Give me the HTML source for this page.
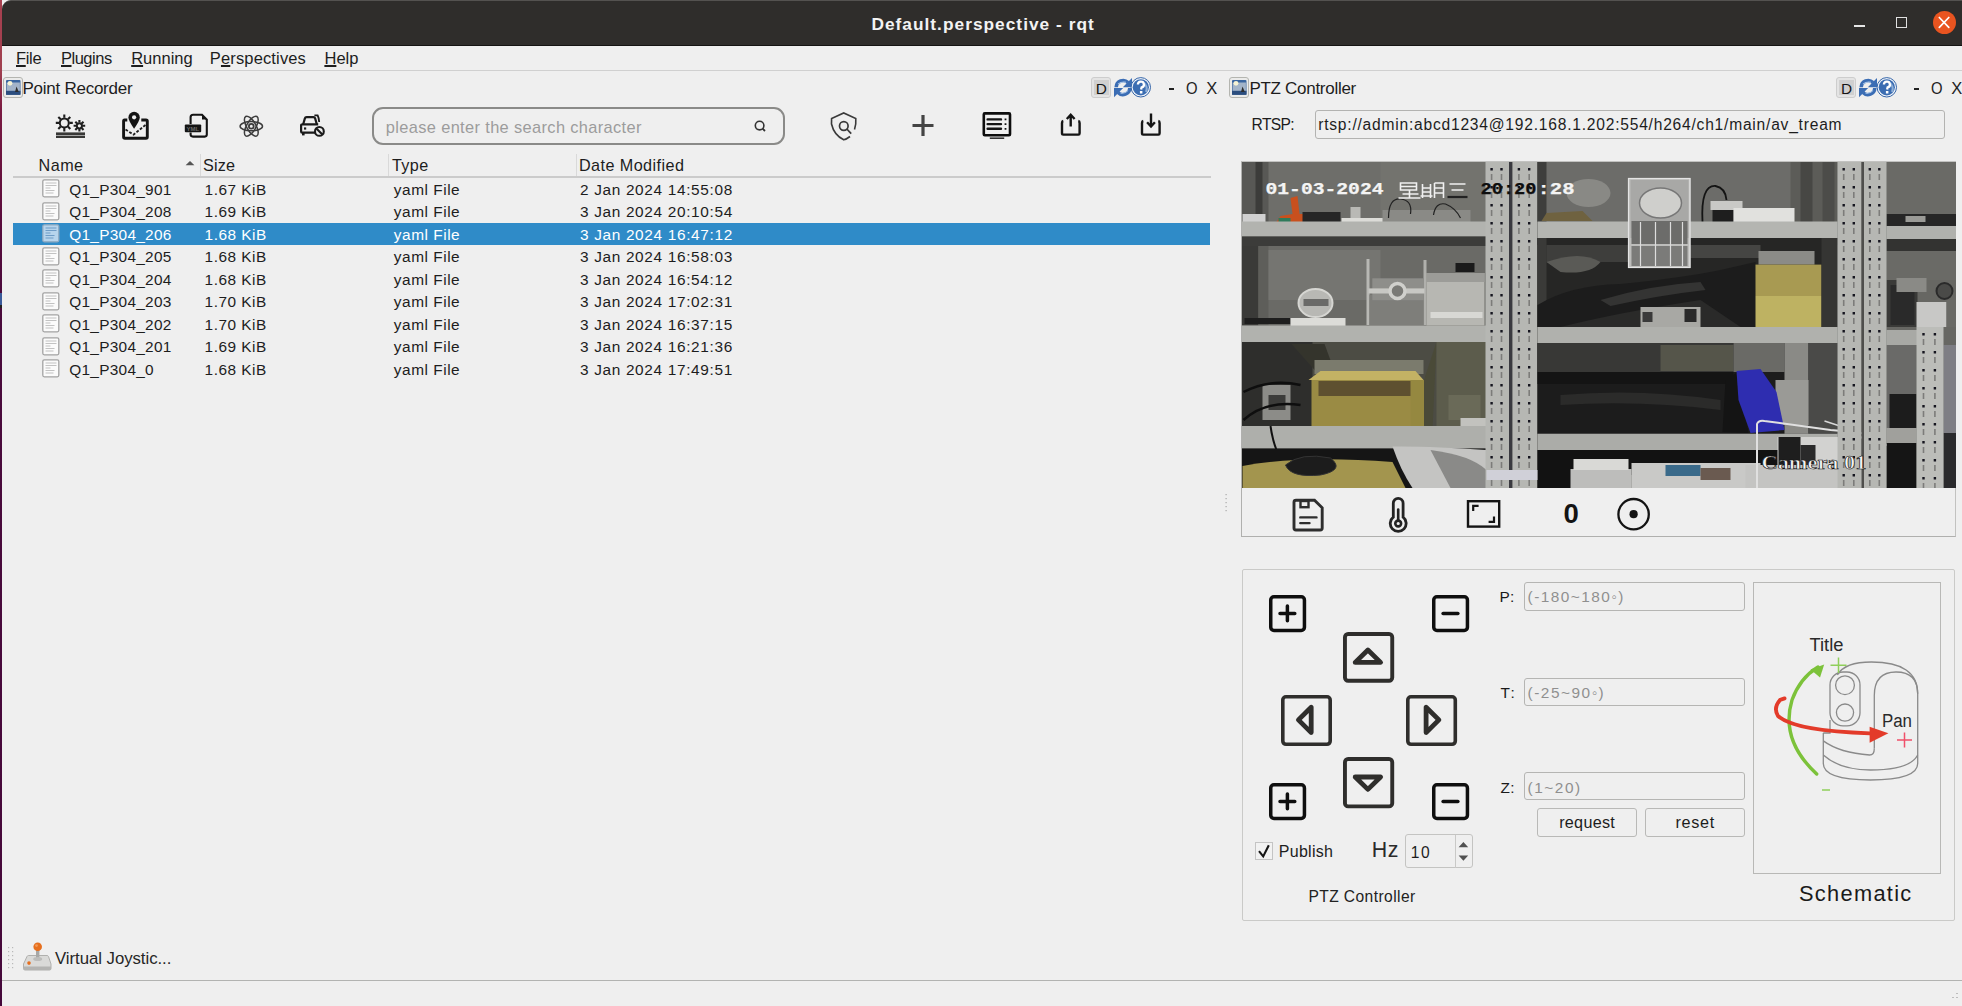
<!DOCTYPE html>
<html><head><meta charset="utf-8">
<style>
*{margin:0;padding:0;box-sizing:border-box}
html,body{width:1962px;height:1006px;overflow:hidden;background:#efefef;font-family:"Liberation Sans",sans-serif;color:#1d1d1d}
.a{position:absolute;white-space:nowrap}
.t{position:absolute;white-space:nowrap;line-height:1}
</style></head><body>

<div class="a" style="left:0;top:0;width:2px;height:1006px;background:linear-gradient(#a8404f 0px,#a04050 70px,#7a1a42 110px,#5a0c3c 220px,#4a0a3c 300px,#45083a 1006px)"></div>
<div class="a" style="left:2px;top:0;width:1960px;height:46px;background:#2f2d2b;border-top:1px solid #545250;border-bottom:1px solid #151413;border-top-left-radius:9px"></div>
<div class="t" id="title" style="left:871.40px;top:15.54px;font-size:17.3px;color:#f3f3f3;font-weight:bold;font-family:'Liberation Sans',sans-serif;letter-spacing:1.021px;">Default.perspective - rqt</div>
<div class="a" style="left:1854px;top:25px;width:11px;height:2px;background:#e6e6e6"></div>
<div class="a" style="left:1896px;top:17px;width:11px;height:11px;border:1.6px solid #e0e0e0"></div>
<div class="a" style="left:1932.5px;top:10.7px;width:23.5px;height:23.5px;border-radius:50%;background:#e95420"></div>
<svg class="a" style="left:1932px;top:11px" width="24" height="24"><path d="M7.3 6.5 L16.8 16.3 M16.8 6.5 L7.3 16.3" stroke="#fff" stroke-width="1.7" stroke-linecap="round"/></svg>
<div class="a" style="left:0;top:293px;width:2px;height:13px;background:#3a5a9a"></div><div class="a" style="left:0;top:305px;width:2px;height:3px;background:#222"></div>
<div class="t" id="m_file" style="left:16.00px;top:50.25px;font-size:16.5px;color:#1d1d1d;font-weight:normal;font-family:'Liberation Sans',sans-serif;letter-spacing:-0.333px;"><span style="text-decoration:underline;text-underline-offset:1px;text-decoration-thickness:1.6px">F</span>ile</div>
<div class="t" id="m_plug" style="left:61.00px;top:50.25px;font-size:16.5px;color:#1d1d1d;font-weight:normal;font-family:'Liberation Sans',sans-serif;letter-spacing:-0.500px;"><span style="text-decoration:underline;text-underline-offset:1px;text-decoration-thickness:1.6px">P</span>lugins</div>
<div class="t" id="m_run" style="left:131.20px;top:50.25px;font-size:16.5px;color:#1d1d1d;font-weight:normal;font-family:'Liberation Sans',sans-serif;letter-spacing:0.000px;"><span style="text-decoration:underline;text-underline-offset:1px;text-decoration-thickness:1.6px">R</span>unning</div>
<div class="t" id="m_persp" style="left:209.80px;top:50.25px;font-size:16.5px;color:#1d1d1d;font-weight:normal;font-family:'Liberation Sans',sans-serif;letter-spacing:0.145px;">P<span style="text-decoration:underline;text-underline-offset:1px;text-decoration-thickness:1.6px">e</span>rspectives</div>
<div class="t" id="m_help" style="left:324.40px;top:50.25px;font-size:16.5px;color:#1d1d1d;font-weight:normal;font-family:'Liberation Sans',sans-serif;letter-spacing:0.067px;"><span style="text-decoration:underline;text-underline-offset:1px;text-decoration-thickness:1.6px">H</span>elp</div>
<div class="a" style="left:2px;top:70px;width:1960px;height:1px;background:#d0d0d0"></div>
<svg class="a" style="left:3px;top:77px" width="20" height="21" viewBox="0 0 20 21"><rect x="0.5" y="0.5" width="19" height="20" rx="2.5" fill="#ebebea" stroke="#b4b5b0"/>
<rect x="3" y="3" width="14.5" height="14.8" rx="1" fill="#3a66a0"/>
<rect x="3.6" y="5.5" width="13.3" height="8.5" fill="#a3b4c9"/>
<circle cx="7" cy="6.3" r="2.4" fill="#f6f3d4"/>
<path d="M3 13.8 L17.5 13.8 L17.5 17.8 L3 17.8Z" fill="#2b4d7e"/>
<path d="M13.5 9.5 L15.8 15 L12 15Z" fill="#2e2e2e"/></svg>
<div class="t" id="dt_pr" style="left:22.40px;top:79.98px;font-size:17px;color:#1d1d1d;font-weight:normal;font-family:'Liberation Sans',sans-serif;letter-spacing:-0.246px;">Point Recorder</div>
<div class="a" style="left:1091.2px;top:77px;width:20px;height:21px;border:1px solid #cdcdcd;border-radius:3px;background:#e4e4e4"></div>
<div class="a" style="left:1094.2px;top:80px;width:15px;height:15px;background:#d0d0d0"></div>
<div class="t" style="left:1095.8px;top:80.59px;font-size:15.4px;color:#161616;letter-spacing:0">D</div>
<svg class="a" style="left:1112.5px;top:77px" width="20" height="21" viewBox="0 0 20 21"><path d="M3.2 10.2 A6.9 6.9 0 0 1 15 5.6" fill="none" stroke="#3b6db4" stroke-width="3.6"/>
<path d="M19 1 L19 10.3 L9.8 10.3Z" fill="#3b6db4"/>
<path d="M16.8 11 A6.9 6.9 0 0 1 5 15.6" fill="none" stroke="#3b6db4" stroke-width="3.6"/>
<path d="M1 20.2 L1 10.9 L10.2 10.9Z" fill="#3b6db4"/>
<path d="M5 7.2 Q8.5 4.2 13 5.2 M15 13.5 Q12 17 7.5 16" fill="none" stroke="#a9c6ea" stroke-width="1.1"/></svg>
<svg class="a" style="left:1130.4px;top:77px" width="22" height="21" viewBox="0 0 22 21"><circle cx="10.8" cy="10.3" r="9.7" fill="#f2f5fa" stroke="#3565a8" stroke-width="1"/>
<circle cx="10.8" cy="10.3" r="8.1" fill="#3b6db2"/>
<path d="M14 6 A8 8 0 0 1 16 15" stroke="#8fb0d8" stroke-width="2" fill="none"/>
<path d="M7.9 7.6 A3 2.9 0 1 1 11.6 10.4 L11.1 12.6" stroke="#fff" stroke-width="2.3" fill="none"/>
<rect x="9.9" y="14" width="2.5" height="2.5" fill="#fff"/></svg>
<div class="a" style="left:1168.7px;top:88px;width:5px;height:2.2px;background:#222"></div>
<div class="t" style="left:1185.8px;top:79.85px;font-size:16.5px;color:#222;transform:scaleX(0.9);transform-origin:left">O</div>
<div class="t" style="left:1206.2px;top:79.85px;font-size:16.5px;color:#222">X</div>
<svg class="a" style="left:1229px;top:77px" width="20" height="21" viewBox="0 0 20 21"><rect x="0.5" y="0.5" width="19" height="20" rx="2.5" fill="#ebebea" stroke="#b4b5b0"/>
<rect x="3" y="3" width="14.5" height="14.8" rx="1" fill="#3a66a0"/>
<rect x="3.6" y="5.5" width="13.3" height="8.5" fill="#a3b4c9"/>
<circle cx="7" cy="6.3" r="2.4" fill="#f6f3d4"/>
<path d="M3 13.8 L17.5 13.8 L17.5 17.8 L3 17.8Z" fill="#2b4d7e"/>
<path d="M13.5 9.5 L15.8 15 L12 15Z" fill="#2e2e2e"/></svg>
<div class="t" id="dt_ptz" style="left:1249.40px;top:79.98px;font-size:17px;color:#1d1d1d;font-weight:normal;font-family:'Liberation Sans',sans-serif;letter-spacing:-0.285px;">PTZ Controller</div>
<div class="a" style="left:1836.3px;top:77px;width:20px;height:21px;border:1px solid #cdcdcd;border-radius:3px;background:#e4e4e4"></div>
<div class="a" style="left:1839.3px;top:80px;width:15px;height:15px;background:#d0d0d0"></div>
<div class="t" style="left:1840.8999999999999px;top:80.59px;font-size:15.4px;color:#161616;letter-spacing:0">D</div>
<svg class="a" style="left:1857.6px;top:77px" width="20" height="21" viewBox="0 0 20 21"><path d="M3.2 10.2 A6.9 6.9 0 0 1 15 5.6" fill="none" stroke="#3b6db4" stroke-width="3.6"/>
<path d="M19 1 L19 10.3 L9.8 10.3Z" fill="#3b6db4"/>
<path d="M16.8 11 A6.9 6.9 0 0 1 5 15.6" fill="none" stroke="#3b6db4" stroke-width="3.6"/>
<path d="M1 20.2 L1 10.9 L10.2 10.9Z" fill="#3b6db4"/>
<path d="M5 7.2 Q8.5 4.2 13 5.2 M15 13.5 Q12 17 7.5 16" fill="none" stroke="#a9c6ea" stroke-width="1.1"/></svg>
<svg class="a" style="left:1875.5px;top:77px" width="22" height="21" viewBox="0 0 22 21"><circle cx="10.8" cy="10.3" r="9.7" fill="#f2f5fa" stroke="#3565a8" stroke-width="1"/>
<circle cx="10.8" cy="10.3" r="8.1" fill="#3b6db2"/>
<path d="M14 6 A8 8 0 0 1 16 15" stroke="#8fb0d8" stroke-width="2" fill="none"/>
<path d="M7.9 7.6 A3 2.9 0 1 1 11.6 10.4 L11.1 12.6" stroke="#fff" stroke-width="2.3" fill="none"/>
<rect x="9.9" y="14" width="2.5" height="2.5" fill="#fff"/></svg>
<div class="a" style="left:1913.8px;top:88px;width:5px;height:2.2px;background:#222"></div>
<div class="t" style="left:1930.8999999999999px;top:79.85px;font-size:16.5px;color:#222;transform:scaleX(0.9);transform-origin:left">O</div>
<div class="t" style="left:1951.3px;top:79.85px;font-size:16.5px;color:#222">X</div>
<svg class="a" style="left:6px;top:945px" width="10" height="26" viewBox="0 0 10 26">
<g fill="#b9b9b9"><rect x="2" y="2" width="1.2" height="1.2"/><rect x="6" y="2" width="1.2" height="1.2"/>
<rect x="2" y="6" width="1.2" height="1.2"/><rect x="6" y="6" width="1.2" height="1.2"/>
<rect x="2" y="10" width="1.2" height="1.2"/><rect x="6" y="10" width="1.2" height="1.2"/>
<rect x="2" y="14" width="1.2" height="1.2"/><rect x="6" y="14" width="1.2" height="1.2"/>
<rect x="2" y="18" width="1.2" height="1.2"/><rect x="6" y="18" width="1.2" height="1.2"/>
<rect x="2" y="22" width="1.2" height="1.2"/><rect x="6" y="22" width="1.2" height="1.2"/></g></svg>
<svg class="a" style="left:22px;top:941px" width="32" height="32" viewBox="0 0 32 32">
<path d="M6.5 14.5 L25 14.5 Q26 14.5 26.5 15.5 L29 23 L29 27.5 Q29 29 27.5 29 L3 29 Q1.5 29 1.5 27.5 L1.5 23 L5 15.5 Q5.5 14.5 6.5 14.5Z" fill="#dadad8" stroke="#a9a9a7" stroke-width="0.9"/>
<path d="M1.5 25.5 L29 25.5 L29 27.5 Q29 29 27.5 29 L3 29 Q1.5 29 1.5 27.5Z" fill="#b4b4b2"/>
<rect x="14" y="8" width="3.4" height="10" fill="#a8a8a6"/>
<ellipse cx="15.7" cy="18" rx="4.5" ry="2" fill="#bdbdbb"/>
<circle cx="15.7" cy="5.8" r="4.3" fill="#e66f1e"/>
<circle cx="14.5" cy="4.6" r="1.4" fill="#f39a55"/>
<circle cx="7" cy="22.1" r="1.8" fill="#e66f1e"/>
</svg>
<div class="t" id="vj" style="left:55.00px;top:950.81px;font-size:16.8px;color:#262626;font-weight:normal;font-family:'Liberation Sans',sans-serif;letter-spacing:-0.047px;">Virtual Joystic...</div>
<div class="a" style="left:2px;top:980px;width:1960px;height:1px;background:#b2b3b1"></div>
<svg class="a" style="left:1944px;top:990px" width="18" height="16"><g fill="#bdbdbd"><rect x="12" y="3" width="2" height="1"/><rect x="8" y="7" width="2" height="1"/><rect x="12" y="7" width="2" height="1"/></g></svg>
<svg class="a" style="left:50px;top:105px" width="40" height="40" viewBox="50 105 40 40">
<g fill="none" stroke="#1e1e1e">
<circle cx="64.3" cy="122.9" r="4.5" stroke-width="2"/>
<circle cx="79.4" cy="125.8" r="2.6" stroke-width="2"/>
</g>
<g stroke="#1e1e1e" stroke-width="2.1">
<path d="M64.3 114.4v3.4 M64.3 128v3.4 M55.8 122.9h3.4 M69.4 122.9h3.4 M58.3 116.9l2.4 2.4 M67.9 126.5l2.4 2.4 M58.3 128.9l2.4-2.4 M67.9 119.3l2.4-2.4"/>
<path d="M79.4 120v2.6 M79.4 129v2.6 M73.6 125.8h2.6 M82.6 125.8h2.6 M75.3 121.7l1.8 1.8 M81.7 128.1l1.8 1.8 M75.3 129.9l1.8-1.8 M81.7 123.5l1.8-1.8"/>
</g>
<rect x="56" y="132.4" width="29" height="2.6" fill="#383836"/>
<rect x="56" y="135.6" width="29" height="2.4" fill="#383836"/>
</svg>
<svg class="a" style="left:115px;top:105px" width="40" height="40" viewBox="115 105 40 40">
<path d="M127.3 120 L124.6 120 Q123.6 120 123.6 121.2 L123.6 137 Q123.6 138.2 125 138.2 L146 138.2 Q147.3 138.2 147.3 137 L147.3 121.2 Q147.3 120 146 120 L141.3 120" fill="none" stroke="#141414" stroke-width="2.9"/>
<path d="M134.1 111.8 A5.7 5.7 0 0 1 139.8 117.5 Q139.8 120.5 134.1 128.8 Q128.4 120.5 128.4 117.5 A5.7 5.7 0 0 1 134.1 111.8Z" fill="#141414"/>
<circle cx="134.1" cy="117.3" r="2.1" fill="#efefef"/>
<path d="M125.5 129.6 L133.6 134.6 L146 124.6" fill="none" stroke="#1e1e1e" stroke-width="1.8" stroke-dasharray="2.8 1.6"/>
</svg>
<svg class="a" style="left:180px;top:105px" width="35" height="40" viewBox="180 105 35 40">
<path d="M190.6 124 L190.6 117.2 Q190.6 114.7 193.2 114.7 L202 114.7 L206.8 119.6 L206.8 134.6 Q206.8 136.6 204.8 136.6 L193 136.6 Q190.6 136.6 190.6 134.6 L190.6 132.4" fill="none" stroke="#141414" stroke-width="2.1"/>
<path d="M202 114.7 L206.8 119.6 L202 119.6Z" fill="#141414"/>
<rect x="184.8" y="124.4" width="16.4" height="7.8" rx="1" fill="#141414"/>
<text x="186.4" y="130.6" font-size="6" font-family="Liberation Sans" font-weight="bold" fill="#6a6a6a">YML</text>
</svg>
<svg class="a" style="left:236px;top:110px" width="32" height="32" viewBox="236 110 32 32">
<g fill="none" stroke="#3c3c3c" stroke-width="1.5">
<ellipse cx="251.3" cy="126.2" rx="11.2" ry="4.6"/>
<ellipse cx="251.3" cy="126.2" rx="11.2" ry="4.6" transform="rotate(60 251.3 126.2)"/>
<ellipse cx="251.3" cy="126.2" rx="11.2" ry="4.6" transform="rotate(-60 251.3 126.2)"/>
<circle cx="251.3" cy="126.2" r="2.4" stroke-width="1.8"/>
</g>
</svg>
<svg class="a" style="left:296px;top:110px" width="34" height="32" viewBox="296 110 34 32">
<path d="M303.2 124.2 L304.8 118.6 Q305.2 117.2 306.6 117.2 L313.5 117.2 Q314.8 117.2 315.2 118.6 L316.8 124.2" fill="none" stroke="#1a1a1a" stroke-width="2.2"/>
<path d="M314.4 115.3 L317.6 115.3 Q318.8 117.5 319.2 122" fill="none" stroke="#1a1a1a" stroke-width="1.8"/>
<path d="M315 132.6 L302.2 132.6 Q301.1 132.6 301.1 131.5 L301.1 125.6 Q301.1 124.4 302.6 124.4 L318.2 124.4" fill="none" stroke="#1a1a1a" stroke-width="2.2"/>
<rect x="302" y="132" width="2.6" height="3.4" fill="#1a1a1a"/>
<rect x="304" y="127.4" width="2.2" height="2.2" fill="#1a1a1a"/>
<circle cx="319.4" cy="131.4" r="4.4" fill="none" stroke="#1a1a1a" stroke-width="2.1"/>
<path d="M316.4 128.4 L322.4 134.4" stroke="#1a1a1a" stroke-width="2.1"/>
</svg>
<div class="a" style="left:372px;top:107px;width:413px;height:38px;border:2px solid #8a8a88;border-radius:11px"></div>
<div class="t" id="search" style="left:385.80px;top:118.76px;font-size:16.4px;color:#9c9c9c;font-weight:normal;font-family:'Liberation Sans',sans-serif;letter-spacing:0.359px;">please enter the search character</div>
<svg class="a" style="left:752px;top:117px" width="16" height="18" viewBox="0 0 16 18">
<circle cx="7.6" cy="8.6" r="4.3" fill="none" stroke="#333" stroke-width="1.6"/>
<path d="M10.6 11.6 L13 14" stroke="#333" stroke-width="1.8"/></svg>
<svg class="a" style="left:828px;top:110px" width="32" height="32" viewBox="828 110 32 32">
<path d="M854.5 129.5 Q856.3 124 855.8 118.5 L843.7 113 L831.6 118.5 L831.5 124 Q834 135 843.7 139.8 Q846.5 139.2 850 136.5" fill="none" stroke="#3a3a3a" stroke-width="1.6"/>
<circle cx="843.8" cy="126" r="4.3" fill="none" stroke="#3a3a3a" stroke-width="1.7"/>
<path d="M846.8 129 L851.2 133.6" stroke="#3a3a3a" stroke-width="1.8"/></svg>
<svg class="a" style="left:908px;top:110px" width="30" height="30" viewBox="908 110 30 30">
<path d="M912.5 125.5 H933.5 M923 115 V136" stroke="#444" stroke-width="3.2"/></svg>
<svg class="a" style="left:978px;top:108px" width="38" height="34" viewBox="978 108 38 34">
<rect x="983.8" y="113.4" width="26.2" height="21.8" rx="1" fill="none" stroke="#0d0d0d" stroke-width="2.6"/>
<path d="M987.6 119.4 H1001 M987.6 124.1 H1001 M987.6 128.8 H1001" stroke="#151515" stroke-width="2.4" stroke-linecap="round"/>
<path d="M1005.5 118.4 v1.8 M1005.5 123.2 v1.8 M1005.5 127.9 v1.8" stroke="#151515" stroke-width="1.8"/>
<rect x="989.8" y="137.4" width="14.4" height="1.6" fill="#333"/></svg>
<svg class="a" style="left:1055px;top:108px;left:1055.0px" width="30" height="32" viewBox="1055.0 108 30 32">
<path d="M1063.3 121 Q1062.0 121.3 1062.0 123 L1062.0 133.3 Q1062.0 134.6 1063.3 134.6 L1078.4 134.6 Q1079.6 134.6 1079.6 133.3 L1079.6 123 Q1079.6 121.3 1078.3 121" fill="none" stroke="#151515" stroke-width="2.4"/>
</svg>
<svg class="a" style="left:1055px;top:108px;left:1135.3px" width="30" height="32" viewBox="1135.3 108 30 32">
<path d="M1143.6 121 Q1142.3 121.3 1142.3 123 L1142.3 133.3 Q1142.3 134.6 1143.6 134.6 L1158.7 134.6 Q1159.8999999999999 134.6 1159.8999999999999 133.3 L1159.8999999999999 123 Q1159.8999999999999 121.3 1158.6 121" fill="none" stroke="#151515" stroke-width="2.4"/>
</svg>
<svg class="a" style="left:1060px;top:108px" width="22" height="24" viewBox="1060 108 22 24">
<path d="M1070.7 126.5 V115.8 M1066.8 119 L1070.7 114.8 L1074.6 119" fill="none" stroke="#151515" stroke-width="2.4"/></svg>
<svg class="a" style="left:1140px;top:108px" width="22" height="24" viewBox="1140 108 22 24">
<path d="M1151 113.6 V126 M1147.1 122.3 L1151 126.5 L1154.9 122.3" fill="none" stroke="#151515" stroke-width="2.4"/></svg>
<div class="t" id="h_name" style="left:38.60px;top:157.29px;font-size:16.2px;color:#1d1d1d;font-weight:normal;font-family:'Liberation Sans',sans-serif;letter-spacing:0.433px;">Name</div>
<svg class="a" style="left:184px;top:159px" width="12" height="8"><path d="M1.6 6.2 L6 2 L10.4 6.2Z" fill="#555"/></svg>
<div class="a" style="left:199.5px;top:154px;width:1px;height:22px;background:#d9d9d9"></div>
<div class="a" style="left:388px;top:154px;width:1px;height:22px;background:#d9d9d9"></div>
<div class="a" style="left:576px;top:154px;width:1px;height:22px;background:#d9d9d9"></div>
<div class="t" id="h_size" style="left:203.00px;top:157.29px;font-size:16.2px;color:#1d1d1d;font-weight:normal;font-family:'Liberation Sans',sans-serif;letter-spacing:0.133px;">Size</div>
<div class="t" id="h_type" style="left:392.00px;top:157.29px;font-size:16.2px;color:#1d1d1d;font-weight:normal;font-family:'Liberation Sans',sans-serif;letter-spacing:0.367px;">Type</div>
<div class="t" id="h_date" style="left:579.00px;top:157.29px;font-size:16.2px;color:#1d1d1d;font-weight:normal;font-family:'Liberation Sans',sans-serif;letter-spacing:0.417px;">Date Modified</div>
<div class="a" style="left:13px;top:176px;width:1198px;height:2px;background:#cbcbcb"></div>
<div class="a" style="left:13px;top:223px;width:1197px;height:22px;background:#2f8bc8"></div>
<svg class="a" style="left:42px;top:179.3px" width="18" height="19" viewBox="0 0 18 19"><rect x="0.8" y="0.8" width="16" height="17" rx="1.5" fill="#fbfbfb" stroke="#a3a3a3" stroke-width="1.3"/><path d="M3.5 4h11 M3.5 6.5h11 M3.5 9h5 M3.5 11.5h9 M3.5 14h8" stroke="#c2c2c2" stroke-width="1.2"/></svg>
<div class="t" id="r_name" style="left:69.20px;top:181.99px;font-size:15.4px;color:#1d1d1d;font-weight:normal;font-family:'Liberation Sans',sans-serif;letter-spacing:0.290px;">Q1_P304_901</div>
<div class="t" id="r_size" style="left:204.60px;top:181.99px;font-size:15.4px;color:#1d1d1d;font-weight:normal;font-family:'Liberation Sans',sans-serif;letter-spacing:0.500px;">1.67 KiB</div>
<div class="t" id="r_type" style="left:393.80px;top:181.99px;font-size:15.4px;color:#1d1d1d;font-weight:normal;font-family:'Liberation Sans',sans-serif;letter-spacing:0.537px;">yaml File</div>
<div class="t" id="r_date" style="left:580.00px;top:181.99px;font-size:15.4px;color:#1d1d1d;font-weight:normal;font-family:'Liberation Sans',sans-serif;letter-spacing:0.661px;">2 Jan 2024 14:55:08</div>
<svg class="a" style="left:42px;top:201.8px" width="18" height="19" viewBox="0 0 18 19"><rect x="0.8" y="0.8" width="16" height="17" rx="1.5" fill="#fbfbfb" stroke="#a3a3a3" stroke-width="1.3"/><path d="M3.5 4h11 M3.5 6.5h11 M3.5 9h5 M3.5 11.5h9 M3.5 14h8" stroke="#c2c2c2" stroke-width="1.2"/></svg>
<div class="t" style="left:69.20px;top:204.49px;font-size:15.4px;color:#1d1d1d;letter-spacing:0.290px">Q1_P304_208</div>
<div class="t" style="left:204.60px;top:204.49px;font-size:15.4px;color:#1d1d1d;letter-spacing:0.500px">1.69 KiB</div>
<div class="t" style="left:393.80px;top:204.49px;font-size:15.4px;color:#1d1d1d;letter-spacing:0.537px">yaml File</div>
<div class="t" style="left:580.00px;top:204.49px;font-size:15.4px;color:#1d1d1d;letter-spacing:0.661px">3 Jan 2024 20:10:54</div>
<svg class="a" style="left:42px;top:224.3px" width="18" height="19" viewBox="0 0 18 19"><rect x="0.8" y="0.8" width="16" height="17" rx="1.5" fill="#b7d4ec" stroke="#8fa9c0" stroke-width="1.3"/><path d="M3.5 4h11 M3.5 6.5h11 M3.5 9h5 M3.5 11.5h9 M3.5 14h8" stroke="#6f9cc6" stroke-width="1.2"/></svg>
<div class="t" style="left:69.20px;top:226.99px;font-size:15.4px;color:#ffffff;letter-spacing:0.290px">Q1_P304_206</div>
<div class="t" style="left:204.60px;top:226.99px;font-size:15.4px;color:#ffffff;letter-spacing:0.500px">1.68 KiB</div>
<div class="t" style="left:393.80px;top:226.99px;font-size:15.4px;color:#ffffff;letter-spacing:0.537px">yaml File</div>
<div class="t" style="left:580.00px;top:226.99px;font-size:15.4px;color:#ffffff;letter-spacing:0.661px">3 Jan 2024 16:47:12</div>
<svg class="a" style="left:42px;top:246.8px" width="18" height="19" viewBox="0 0 18 19"><rect x="0.8" y="0.8" width="16" height="17" rx="1.5" fill="#fbfbfb" stroke="#a3a3a3" stroke-width="1.3"/><path d="M3.5 4h11 M3.5 6.5h11 M3.5 9h5 M3.5 11.5h9 M3.5 14h8" stroke="#c2c2c2" stroke-width="1.2"/></svg>
<div class="t" style="left:69.20px;top:249.49px;font-size:15.4px;color:#1d1d1d;letter-spacing:0.290px">Q1_P304_205</div>
<div class="t" style="left:204.60px;top:249.49px;font-size:15.4px;color:#1d1d1d;letter-spacing:0.500px">1.68 KiB</div>
<div class="t" style="left:393.80px;top:249.49px;font-size:15.4px;color:#1d1d1d;letter-spacing:0.537px">yaml File</div>
<div class="t" style="left:580.00px;top:249.49px;font-size:15.4px;color:#1d1d1d;letter-spacing:0.661px">3 Jan 2024 16:58:03</div>
<svg class="a" style="left:42px;top:269.3px" width="18" height="19" viewBox="0 0 18 19"><rect x="0.8" y="0.8" width="16" height="17" rx="1.5" fill="#fbfbfb" stroke="#a3a3a3" stroke-width="1.3"/><path d="M3.5 4h11 M3.5 6.5h11 M3.5 9h5 M3.5 11.5h9 M3.5 14h8" stroke="#c2c2c2" stroke-width="1.2"/></svg>
<div class="t" style="left:69.20px;top:271.99px;font-size:15.4px;color:#1d1d1d;letter-spacing:0.290px">Q1_P304_204</div>
<div class="t" style="left:204.60px;top:271.99px;font-size:15.4px;color:#1d1d1d;letter-spacing:0.500px">1.68 KiB</div>
<div class="t" style="left:393.80px;top:271.99px;font-size:15.4px;color:#1d1d1d;letter-spacing:0.537px">yaml File</div>
<div class="t" style="left:580.00px;top:271.99px;font-size:15.4px;color:#1d1d1d;letter-spacing:0.661px">3 Jan 2024 16:54:12</div>
<svg class="a" style="left:42px;top:291.8px" width="18" height="19" viewBox="0 0 18 19"><rect x="0.8" y="0.8" width="16" height="17" rx="1.5" fill="#fbfbfb" stroke="#a3a3a3" stroke-width="1.3"/><path d="M3.5 4h11 M3.5 6.5h11 M3.5 9h5 M3.5 11.5h9 M3.5 14h8" stroke="#c2c2c2" stroke-width="1.2"/></svg>
<div class="t" style="left:69.20px;top:294.49px;font-size:15.4px;color:#1d1d1d;letter-spacing:0.290px">Q1_P304_203</div>
<div class="t" style="left:204.60px;top:294.49px;font-size:15.4px;color:#1d1d1d;letter-spacing:0.500px">1.70 KiB</div>
<div class="t" style="left:393.80px;top:294.49px;font-size:15.4px;color:#1d1d1d;letter-spacing:0.537px">yaml File</div>
<div class="t" style="left:580.00px;top:294.49px;font-size:15.4px;color:#1d1d1d;letter-spacing:0.661px">3 Jan 2024 17:02:31</div>
<svg class="a" style="left:42px;top:314.3px" width="18" height="19" viewBox="0 0 18 19"><rect x="0.8" y="0.8" width="16" height="17" rx="1.5" fill="#fbfbfb" stroke="#a3a3a3" stroke-width="1.3"/><path d="M3.5 4h11 M3.5 6.5h11 M3.5 9h5 M3.5 11.5h9 M3.5 14h8" stroke="#c2c2c2" stroke-width="1.2"/></svg>
<div class="t" style="left:69.20px;top:316.99px;font-size:15.4px;color:#1d1d1d;letter-spacing:0.290px">Q1_P304_202</div>
<div class="t" style="left:204.60px;top:316.99px;font-size:15.4px;color:#1d1d1d;letter-spacing:0.500px">1.70 KiB</div>
<div class="t" style="left:393.80px;top:316.99px;font-size:15.4px;color:#1d1d1d;letter-spacing:0.537px">yaml File</div>
<div class="t" style="left:580.00px;top:316.99px;font-size:15.4px;color:#1d1d1d;letter-spacing:0.661px">3 Jan 2024 16:37:15</div>
<svg class="a" style="left:42px;top:336.8px" width="18" height="19" viewBox="0 0 18 19"><rect x="0.8" y="0.8" width="16" height="17" rx="1.5" fill="#fbfbfb" stroke="#a3a3a3" stroke-width="1.3"/><path d="M3.5 4h11 M3.5 6.5h11 M3.5 9h5 M3.5 11.5h9 M3.5 14h8" stroke="#c2c2c2" stroke-width="1.2"/></svg>
<div class="t" style="left:69.20px;top:339.49px;font-size:15.4px;color:#1d1d1d;letter-spacing:0.290px">Q1_P304_201</div>
<div class="t" style="left:204.60px;top:339.49px;font-size:15.4px;color:#1d1d1d;letter-spacing:0.500px">1.69 KiB</div>
<div class="t" style="left:393.80px;top:339.49px;font-size:15.4px;color:#1d1d1d;letter-spacing:0.537px">yaml File</div>
<div class="t" style="left:580.00px;top:339.49px;font-size:15.4px;color:#1d1d1d;letter-spacing:0.661px">3 Jan 2024 16:21:36</div>
<svg class="a" style="left:42px;top:359.3px" width="18" height="19" viewBox="0 0 18 19"><rect x="0.8" y="0.8" width="16" height="17" rx="1.5" fill="#fbfbfb" stroke="#a3a3a3" stroke-width="1.3"/><path d="M3.5 4h11 M3.5 6.5h11 M3.5 9h5 M3.5 11.5h9 M3.5 14h8" stroke="#c2c2c2" stroke-width="1.2"/></svg>
<div class="t" style="left:69.20px;top:361.99px;font-size:15.4px;color:#1d1d1d;letter-spacing:0.290px">Q1_P304_0</div>
<div class="t" style="left:204.60px;top:361.99px;font-size:15.4px;color:#1d1d1d;letter-spacing:0.500px">1.68 KiB</div>
<div class="t" style="left:393.80px;top:361.99px;font-size:15.4px;color:#1d1d1d;letter-spacing:0.537px">yaml File</div>
<div class="t" style="left:580.00px;top:361.99px;font-size:15.4px;color:#1d1d1d;letter-spacing:0.661px">3 Jan 2024 17:49:51</div>
<svg class="a" style="left:1224px;top:492px" width="5" height="24"><g fill="#a9a9a9"><rect x="1.5" y="2" width="1.2" height="1.2"/><rect x="1.5" y="6" width="1.2" height="1.2"/><rect x="1.5" y="10" width="1.2" height="1.2"/><rect x="1.5" y="14" width="1.2" height="1.2"/><rect x="1.5" y="18" width="1.2" height="1.2"/></g></svg>
<div class="t" id="rtsp" style="left:1251.60px;top:117.36px;font-size:15.6px;color:#1d1d1d;font-weight:normal;font-family:'Liberation Sans',sans-serif;letter-spacing:-0.675px;">RTSP:</div>
<div class="a" style="left:1314.5px;top:110.3px;width:630px;height:28.3px;border:1px solid #b3b3b1;border-radius:3px;background:#efefef"></div>
<div class="t" id="url" style="left:1318.20px;top:117.36px;font-size:15.6px;color:#1d1d1d;font-weight:normal;font-family:'Liberation Sans',sans-serif;letter-spacing:0.774px;">rtsp://admin:abcd1234@192.168.1.202:554/h264/ch1/main/av_tream</div>
<div class="a" style="left:1240.5px;top:161px;width:715.5px;height:375.5px;border:1px solid #c2c2c0;border-left-color:#b0b0ae;border-bottom-color:#b0b0ae;background:#efefef"></div>
<svg class="a" style="left:1288px;top:495px" width="40" height="40" viewBox="1288 495 40 40">
<path d="M1296 500.2 L1314.5 500.2 L1322.2 507.8 L1322.2 528 Q1322.2 530 1320.2 530 L1296 530 Q1294 530 1294 528 L1294 502.2 Q1294 500.2 1296 500.2Z" fill="none" stroke="#2e2e2e" stroke-width="2.9"/>
<rect x="1300.5" y="501" width="8" height="6.2" fill="none" stroke="#2e2e2e" stroke-width="2.4"/>
<path d="M1300.3 517.4 H1316.5 M1300.3 523.1 H1309.5" stroke="#2e2e2e" stroke-width="2.4" stroke-linecap="round"/>
</svg>
<svg class="a" style="left:1384px;top:495px" width="30" height="40" viewBox="1384 495 30 40">
<path d="M1393.3 517.2 L1393.3 503.3 A4.9 4.9 0 0 1 1403.1 503.3 L1403.1 517.2 A7.95 7.95 0 1 1 1393.3 517.2 Z" fill="none" stroke="#232323" stroke-width="2.8"/>
<path d="M1398.2 509.5 V520" stroke="#232323" stroke-width="2.6" stroke-linecap="round"/>
<circle cx="1398.2" cy="523.5" r="2.9" fill="none" stroke="#232323" stroke-width="2.6"/>
</svg>
<svg class="a" style="left:1462px;top:495px" width="44" height="40" viewBox="1462 495 44 40">
<rect x="1468" y="501.2" width="31.2" height="25.4" fill="none" stroke="#141414" stroke-width="2.4"/>
<path d="M1473.2 511 V505.8 H1478.6 M1494 516.6 V521.8 H1488.6" fill="none" stroke="#141414" stroke-width="2.2"/>
</svg>
<div class="t" id="zero" style="left:1563.50px;top:500.21px;font-size:27.5px;color:#141414;font-weight:bold;font-family:'Liberation Sans',sans-serif;letter-spacing:0.000px;">0</div>
<svg class="a" style="left:1612px;top:492px" width="44" height="44" viewBox="1612 492 44 44">
<circle cx="1633.6" cy="514.2" r="15.2" fill="none" stroke="#141414" stroke-width="2.3"/>
<circle cx="1633.6" cy="514.2" r="4.1" fill="#141414"/>
</svg>
<div class="a" style="left:1242.3px;top:568.6px;width:712.5px;height:352.8px;border:1px solid #cacac8;border-radius:2px"></div>
<svg class="a" style="left:1266.5px;top:592.5px" width="41.2" height="41.2" viewBox="1266.5 592.5 41.2 41.2"><rect x="1270.25" y="596.25" width="33.70" height="33.70" rx="3.2" fill="none" stroke="#0e0e0e" stroke-width="3.5"/><path d="M1279.5 612.9 H1294.3000000000002 M1286.9 605.6 V620.1999999999999" stroke="#0e0e0e" stroke-width="3.5" stroke-linecap="round"/></svg>
<svg class="a" style="left:1429.6px;top:592.5px" width="41.2" height="41.2" viewBox="1429.6 592.5 41.2 41.2"><rect x="1433.35" y="596.25" width="33.70" height="33.70" rx="3.2" fill="none" stroke="#0e0e0e" stroke-width="3.5"/><path d="M1442.6999999999998 612.9 H1457.5" stroke="#0e0e0e" stroke-width="3.5" stroke-linecap="round"/></svg>
<svg class="a" style="left:1266.5px;top:780.5px" width="41.2" height="41.2" viewBox="1266.5 780.5 41.2 41.2"><rect x="1270.25" y="784.25" width="33.70" height="33.70" rx="3.2" fill="none" stroke="#0e0e0e" stroke-width="3.5"/><path d="M1279.5 800.9 H1294.3000000000002 M1286.9 793.6 V808.1999999999999" stroke="#0e0e0e" stroke-width="3.5" stroke-linecap="round"/></svg>
<svg class="a" style="left:1429.6px;top:780.5px" width="41.2" height="41.2" viewBox="1429.6 780.5 41.2 41.2"><rect x="1433.35" y="784.25" width="33.70" height="33.70" rx="3.2" fill="none" stroke="#0e0e0e" stroke-width="3.5"/><path d="M1442.6999999999998 800.9 H1457.5" stroke="#0e0e0e" stroke-width="3.5" stroke-linecap="round"/></svg>
<svg class="a" style="left:1341.2px;top:629.9px" width="55.2" height="54.7" viewBox="1341.2 629.9 55.2 54.7"><rect x="1345.15" y="633.85" width="47.30" height="46.80" rx="3.2" fill="none" stroke="#2f2e2c" stroke-width="3.9"/><path d="M1368.1 650 L1380.8 662.3 L1355.4 662.3Z" stroke="#2f2e2c" stroke-width="4.8" fill="none" stroke-linejoin="round"/></svg>
<svg class="a" style="left:1341.2px;top:755.1px" width="55.2" height="55.3" viewBox="1341.2 755.1 55.2 55.3"><rect x="1345.15" y="759.05" width="47.30" height="47.40" rx="3.2" fill="none" stroke="#2f2e2c" stroke-width="3.9"/><path d="M1368.1 789.5 L1380.8 777.1 L1355.4 777.1Z" stroke="#2f2e2c" stroke-width="4.8" fill="none" stroke-linejoin="round"/></svg>
<svg class="a" style="left:1278.6px;top:692.6px" width="55.0" height="55.1" viewBox="1278.6 692.6 55.0 55.1"><rect x="1282.40" y="696.40" width="47.40" height="47.50" rx="3.2" fill="none" stroke="#2f2e2c" stroke-width="3.6"/><path d="M1298 719.5 L1310.8 706.8 L1310.8 732.2Z" stroke="#2f2e2c" stroke-width="4.8" fill="none" stroke-linejoin="round"/></svg>
<svg class="a" style="left:1403.7px;top:692.6px" width="55.1" height="55.1" viewBox="1403.7 692.6 55.1 55.1"><rect x="1407.50" y="696.40" width="47.50" height="47.50" rx="3.2" fill="none" stroke="#2f2e2c" stroke-width="3.6"/><path d="M1438.6 719.5 L1425.8 706.8 L1425.8 732.2Z" stroke="#2f2e2c" stroke-width="4.8" fill="none" stroke-linejoin="round"/></svg>
<div class="a" style="left:1255.4px;top:842.2px;width:17.5px;height:17.5px;border:1px solid #c4c4c4;background:#f2f2f2"></div>
<svg class="a" style="left:1255px;top:842px" width="18" height="18" viewBox="1255 842 18 18"><path d="M1259 851.2 L1263.2 856.4 L1268.8 845.2" fill="none" stroke="#151515" stroke-width="2.1"/></svg>
<div class="t" id="publish" style="left:1278.80px;top:844.21px;font-size:16px;color:#1d1d1d;font-weight:normal;font-family:'Liberation Sans',sans-serif;letter-spacing:0.267px;">Publish</div>
<div class="t" id="hz" style="left:1371.80px;top:840.01px;font-size:21.4px;color:#2a2a2a;font-weight:normal;font-family:'Liberation Sans',sans-serif;letter-spacing:0.500px;">Hz</div>
<div class="a" style="left:1404.6px;top:833.7px;width:68.5px;height:34.5px;border:1px solid #c4c4c2;border-radius:3px"></div>
<div class="a" style="left:1455.4px;top:834.5px;width:1px;height:33px;background:#c9c9c7"></div>
<svg class="a" style="left:1456px;top:838px" width="16" height="26" viewBox="1456 838 16 26"><path d="M1458.6 847.2 L1463.4 842 L1468.2 847.2Z M1458.6 855.6 L1463.4 860.8 L1468.2 855.6Z" fill="#505050"/></svg>
<div class="t" id="ten" style="left:1410.80px;top:844.56px;font-size:15.6px;color:#1d1d1d;font-weight:normal;font-family:'Liberation Sans',sans-serif;letter-spacing:1.600px;">10</div>
<div class="t" id="ptzlbl" style="left:1308.40px;top:888.56px;font-size:15.6px;color:#222;font-weight:normal;font-family:'Liberation Sans',sans-serif;letter-spacing:0.415px;">PTZ Controller</div>
<div class="t" id="labP" style="left:1499.60px;top:589.39px;font-size:15.4px;color:#1a1a1a;font-weight:normal;font-family:'Liberation Sans',sans-serif;letter-spacing:0.200px;">P:</div>
<div class="a" style="left:1523.5px;top:582.4px;width:221.2px;height:28.2px;border:1px solid #b5b5b3;border-radius:3px"></div>
<div class="t" id="phP" style="left:1527.60px;top:589.39px;font-size:15.4px;color:#8f8f8f;font-weight:normal;font-family:'Liberation Sans',sans-serif;letter-spacing:1.460px;">(-180~180◦)</div>
<div class="t" id="labT" style="left:1500.60px;top:684.69px;font-size:15.4px;color:#1a1a1a;font-weight:normal;font-family:'Liberation Sans',sans-serif;letter-spacing:2.200px;">T:</div>
<div class="a" style="left:1523.5px;top:677.7px;width:221.2px;height:28.2px;border:1px solid #b5b5b3;border-radius:3px"></div>
<div class="t" id="phT" style="left:1527.60px;top:684.69px;font-size:15.4px;color:#8f8f8f;font-weight:normal;font-family:'Liberation Sans',sans-serif;letter-spacing:1.512px;">(-25~90◦)</div>
<div class="t" id="labZ" style="left:1500.60px;top:779.79px;font-size:15.4px;color:#1a1a1a;font-weight:normal;font-family:'Liberation Sans',sans-serif;letter-spacing:0.200px;">Z:</div>
<div class="a" style="left:1523.5px;top:772.2px;width:221.2px;height:28.2px;border:1px solid #b5b5b3;border-radius:3px"></div>
<div class="t" id="phZ" style="left:1527.60px;top:779.79px;font-size:15.4px;color:#8f8f8f;font-weight:normal;font-family:'Liberation Sans',sans-serif;letter-spacing:1.520px;">(1~20)</div>
<div class="a" style="left:1537.0px;top:808.4px;width:100.4px;height:28.7px;border:1px solid #b9b9b7;border-radius:3px;background:#efefef"></div>
<div class="t" id="b_request" style="left:1559.20px;top:814.09px;font-size:16.2px;color:#1d1d1d;font-weight:normal;font-family:'Liberation Sans',sans-serif;letter-spacing:0.267px;">request</div>
<div class="a" style="left:1645.0px;top:808.4px;width:99.7px;height:28.7px;border:1px solid #b9b9b7;border-radius:3px;background:#efefef"></div>
<div class="t" id="b_reset" style="left:1675.40px;top:814.09px;font-size:16.2px;color:#1d1d1d;font-weight:normal;font-family:'Liberation Sans',sans-serif;letter-spacing:0.700px;">reset</div>
<div class="a" style="left:1753px;top:582px;width:187.6px;height:291.5px;border:1px solid #b8b8b6"></div>
<div class="t" id="schem" style="left:1799.00px;top:883.36px;font-size:21.8px;color:#1a1a1a;font-weight:normal;font-family:'Liberation Sans',sans-serif;letter-spacing:1.312px;">Schematic</div>
<svg class="a" style="left:1760px;top:620px" width="180" height="190" viewBox="0 0 180 190">
<g fill="none" stroke="#8a8a8a" stroke-width="1.3">
<path d="M63.3 113 L63.3 143.6 Q63.3 160 110.5 160 Q157.7 160 157.7 143.6 L157.7 73.7 Q157.7 42 111.4 42 Q85 42 77.4 54.8"/>
<path d="M63.3 135 Q80 150 110.5 150 Q150 150 157.7 135"/>
<path d="M114.3 128.4 L114.3 75.6 Q114.3 52 136 52 Q157.7 52 157.7 73.7"/>
<path d="M63.3 120.9 Q80 133 109.6 135 Q114.3 135 114.3 128.4"/>
<rect x="70" y="52" width="30" height="53.8" rx="13"/>
<path d="M70 100 L70 113 L63.3 113"/>
<circle cx="85" cy="65.2" r="9.4"/>
<circle cx="85" cy="92.6" r="8.6"/>
</g>
<path d="M56.7 154 Q20 120 32 80 Q40 58 58 47" fill="none" stroke="#7cc23a" stroke-width="3.4" stroke-linecap="round"/>
<path d="M64.2 44.4 L50.5 49.5 L60 57.5Z" fill="#7cc23a"/>
<path d="M70.5 45.3 H86.5 M78.5 37.5 V53" stroke="#8fcf5a" stroke-width="1.5"/>
<path d="M62 170 H70" stroke="#8fcf5a" stroke-width="1.5"/>
<path d="M24.6 78.4 L20 80 Q13 88 18 96 Q35 111 110 113.3" fill="none" stroke="#e33b2a" stroke-width="3.8" stroke-linecap="round"/>
<path d="M128.4 113.3 L109.6 106.7 L109.6 122.8Z" fill="#e33b2a"/>
<path d="M137 120 H152 M144.5 112.5 V127.5" stroke="#f0506a" stroke-width="1.5"/>
<text x="49.5" y="30.6" font-family="Liberation Sans" font-size="18" fill="#2a2a2a" textLength="34" lengthAdjust="spacingAndGlyphs">Title</text>
<text x="122" y="107.3" font-family="Liberation Sans" font-size="18" fill="#2a2a2a" textLength="30" lengthAdjust="spacingAndGlyphs">Pan</text>
</svg>
<svg class="a" style="left:1241.5px;top:162px" width="714.0" height="326" viewBox="1241.5 162 714.0 326"><rect x="1241.5" y="162" width="714.0" height="326.0" fill="#676763" /><rect x="1241.5" y="162" width="244.5" height="60.0" fill="#6e6e6a" /><rect x="1241.5" y="162" width="26.5" height="60.0" fill="#585855" /><rect x="1255" y="162" width="7.0" height="60.0" fill="#3c3c3a" /><rect x="1380" y="162" width="106.0" height="60.0" fill="#73736e" /><rect x="1537" y="162" width="300.0" height="60.0" fill="#6c6c69" /><rect x="1537" y="162" width="9.0" height="60.0" fill="#3e3e3c" /><ellipse cx="1588" cy="193" rx="22" ry="14" fill="#898985"/><path d="M1541 221 L1592 221 L1582 211 L1546 213Z" fill="#6f6240" /><rect x="1790" y="162" width="47.0" height="60.0" fill="#5c5c58" /><rect x="1800" y="162" width="12.0" height="60.0" fill="#474744" /><rect x="1822" y="162" width="12.0" height="60.0" fill="#4c4c49" /><rect x="1886" y="162" width="69.5" height="60.0" fill="#6a6a66" /><rect x="1886" y="214" width="69.5" height="12.0" fill="#262626" /><rect x="1905" y="216" width="20.0" height="6.0" fill="#9a9a96" /><rect x="1242" y="214" width="23.0" height="8.0" fill="#d0d0d0" /><path d="M1290 198 L1297 196 L1299 214 L1304 214 L1306 222 L1276 222 L1280 216 L1292 214Z" fill="#c8501e" /><rect x="1278" y="218" width="12.0" height="4.0" fill="#2f7a5a" /><rect x="1302" y="212" width="38.0" height="10.0" fill="#262626" /><rect x="1341" y="218" width="44.0" height="4.0" fill="#dcdcd8" /><rect x="1350" y="207" width="10.0" height="11.0" fill="#b9b9b5" /><rect x="1382" y="210" width="88.0" height="12.0" fill="#8a8a86" /><g fill="none" stroke="#222" stroke-width="1.2"><path d="M1388 218 Q1388 198 1400 199 Q1412 200 1410 214"/><path d="M1433 215 Q1435 202 1445 204 Q1455 208 1460 218"/></g><rect x="1710" y="201" width="32.0" height="9.0" fill="#c9c9c6" /><rect x="1712" y="210" width="21.0" height="12.0" fill="#1e1e1e" /><rect x="1733" y="208" width="61.0" height="14.0" fill="#e1e1de" /><path d="M1702 222 Q1700 185 1715 186 Q1725 188 1726 200" fill="none" stroke="#141414" stroke-width="1.8"/><rect x="1241.5" y="221.5" width="245.5" height="15.0" fill="#b2b3af" /><rect x="1537" y="221.5" width="300.0" height="16.5" fill="#b4b5b1" /><rect x="1886" y="226" width="69.5" height="13.4" fill="#b0b1ad" /><rect x="1241.5" y="236.5" width="245.5" height="9.5" fill="#3c3c3a" /><rect x="1537" y="238" width="300.0" height="7.0" fill="#353533" /><rect x="1241.5" y="246" width="245.5" height="79.5" fill="#6a6a66" /><rect x="1241.5" y="246" width="16.5" height="79.5" fill="#3a3a38" /><rect x="1258" y="246" width="10.0" height="79.5" fill="#5e5e5a" /><rect x="1268" y="250" width="112.0" height="50.0" fill="#757571" /><ellipse cx="1315" cy="303" rx="17" ry="14" fill="#b8b8b4" stroke="#d6d6d2" stroke-width="2"/><rect x="1303" y="299" width="25.0" height="7.0" fill="#6a6a68" /><rect x="1244" y="318" width="46.0" height="6.0" fill="#1e1e1e" /><rect x="1290" y="318" width="55.0" height="8.0" fill="#dcdcd8" /><rect x="1366" y="259" width="3.0" height="66.0" fill="#b8b8b4" /><rect x="1423" y="260" width="3.0" height="65.0" fill="#b0b0ac" /><rect x="1369" y="295" width="54.0" height="30.0" fill="#7e7e7a" /><rect x="1371.8" y="278.3" width="51.5" height="21.9" fill="#8e8e8a" /><rect x="1368" y="288.4" width="56.0" height="5.1" fill="#c8c8c4" /><circle cx="1397" cy="291" r="7.5" fill="#7a7a76" stroke="#d0d0cc" stroke-width="3.5"/><rect x="1426" y="273" width="58.0" height="52.5" fill="#b7b7b2" /><rect x="1426" y="273" width="58.0" height="9.0" fill="#9c9c98" /><rect x="1430" y="312" width="52.0" height="6.0" fill="#d8d8d4" /><rect x="1455" y="263" width="19.0" height="9.0" fill="#1a1a1a" /><rect x="1537" y="238" width="300.0" height="89.0" fill="#262625" /><rect x="1537" y="238" width="9.0" height="89.0" fill="#3a3a38" /><rect x="1546" y="245" width="94.0" height="17.0" fill="#3e3e3c" /><rect x="1640" y="245" width="120.0" height="13.0" fill="#454543" /><path d="M1546 262 Q1580 250 1600 262 Q1590 275 1560 272Z" fill="#5a5a56" /><path d="M1537 305 Q1570 285 1620 284 Q1680 278 1720 270 L1755 262 L1756 327 L1537 327Z" fill="#1c1c1c" /><path d="M1600 300 Q1650 285 1700 282 L1705 290 Q1660 295 1610 306Z" fill="#343433" /><path d="M1560 327 Q1620 312 1700 300 L1740 327Z" fill="#2a2a29" /><rect x="1640" y="307" width="60.0" height="20.0" fill="#a8a8a4" /><rect x="1642" y="312" width="10.0" height="10.0" fill="#3a3a3a" /><rect x="1684" y="309" width="12.0" height="13.0" fill="#2a2a2a" /><rect x="1758" y="251" width="56.0" height="13.6" fill="#8b8b87" /><rect x="1755" y="264.6" width="66.0" height="31.4" fill="#a89a52" /><rect x="1755" y="296" width="66.0" height="31.0" fill="#beb262" /><rect x="1821" y="238" width="16.0" height="89.0" fill="#353533" /><rect x="1627.5" y="178" width="62.5" height="90.0" fill="#bdbdbb" /><rect x="1630" y="180" width="58.0" height="58.0" fill="#a8a8a6" /><ellipse cx="1660" cy="203" rx="21" ry="15" fill="#cfcfcc" stroke="#777" stroke-width="1.5"/><rect x="1631" y="221" width="56.0" height="23.0" fill="#6c6c6a" /><rect x="1631" y="246" width="56.0" height="20.0" fill="#7b7b79" /><g stroke="#ddd" stroke-width="1.2"><path d="M1640 222v44 M1655 222v44 M1670 222v44 M1682 222v44"/></g><rect x="1628" y="178.5" width="61.5" height="89" fill="none" stroke="#e4e4e4" stroke-width="1.2"/><rect x="1886" y="239" width="69.5" height="12.0" fill="#333331" /><rect x="1886" y="251" width="69.5" height="29.0" fill="#6a6a66" /><rect x="1886" y="280" width="31.0" height="47.0" fill="#3a3a38" /><rect x="1890" y="285" width="24.0" height="40.0" fill="#2a2a2a" /><rect x="1896" y="278" width="30.0" height="14.0" fill="#8a8a86" /><rect x="1916" y="302" width="30.0" height="25.0" fill="#c8c8c6" /><circle cx="1944" cy="291" r="8" fill="#4a4a48" stroke="#2a2a2a" stroke-width="2"/><rect x="1946" y="300" width="9.5" height="27.0" fill="#6a6a66" /><rect x="1241.5" y="325.5" width="245.5" height="16.5" fill="#b1b2ae" /><rect x="1537" y="327" width="300.0" height="16.0" fill="#b0b1ad" /><rect x="1886" y="330" width="32.0" height="15.0" fill="#a8a9a5" /><rect x="1241.5" y="342" width="245.5" height="84.0" fill="#4c4c44" /><rect x="1241.5" y="342" width="70.5" height="84.0" fill="#2e2e2c" /><rect x="1262" y="385" width="28.0" height="35.0" fill="#8c8c88" /><rect x="1268" y="395" width="17.0" height="15.0" fill="#3c3c3a" /><path d="M1243 392 Q1270 378 1300 385 M1243 420 Q1265 400 1300 405" fill="none" stroke="#0e0e0e" stroke-width="2.5"/><path d="M1291 344 L1324 344 L1334 371 L1315 371Z" fill="#34342c" /><rect x="1314" y="360" width="109.0" height="14.0" fill="#7b7b6d" /><path d="M1308 380 L1320 371 L1415 371 L1423 380Z" fill="#c3b264" /><rect x="1311" y="380" width="112.5" height="49.0" fill="#9a8b44" /><rect x="1318" y="381" width="98.0" height="15.0" fill="#5e5030" /><rect x="1410" y="380" width="13.5" height="49.0" fill="#958840" /><path d="M1423.5 429 L1423.5 380 L1436 342 L1432 429Z" fill="#4a4a38" /><rect x="1436" y="342" width="50.0" height="84.0" fill="#5c5c4c" /><rect x="1448" y="395" width="32.0" height="25.0" fill="#6a6a58" /><rect x="1460" y="418" width="26.0" height="8.0" fill="#c2c2be" /><rect x="1537" y="343" width="300.0" height="90.8" fill="#1c1c1c" /><rect x="1537" y="343" width="196.0" height="29.0" fill="#383836" /><rect x="1660" y="345" width="73.0" height="26.0" fill="#55554a" /><rect x="1537" y="372" width="196.0" height="12.0" fill="#141414" /><path d="M1560 395 Q1640 388 1720 400 L1720 410 Q1640 400 1560 405Z" fill="#2b2b2a" /><rect x="1733" y="343" width="51.0" height="29.0" fill="#6a6a66" /><rect x="1784" y="343" width="24.0" height="90.8" fill="#8a8a86" /><rect x="1808" y="343" width="29.0" height="90.8" fill="#4a4a48" /><rect x="1775" y="380" width="33.0" height="45.0" fill="#9a9a96" /><path d="M1725 380 L1737 372 L1748 433 L1722 432Z" fill="#141414" /><path d="M1736 371 L1760 369 L1776 392 L1784 430 L1750 433 L1738 400Z" fill="#2e2db0" /><rect x="1886" y="345" width="30.0" height="83.0" fill="#6a6a68" /><rect x="1889" y="394" width="27.0" height="34.0" fill="#1c1c1c" /><rect x="1943" y="345" width="12.5" height="88.0" fill="#7e7e84" /><rect x="1241.5" y="426" width="245.5" height="22.5" fill="#aeafab" /><rect x="1537" y="433.8" width="300.0" height="16.2" fill="#abaca8" /><rect x="1886" y="428" width="30.0" height="15.0" fill="#a0a09c" /><path d="M1270 426 Q1272 440 1276 450" fill="none" stroke="#111" stroke-width="2"/><rect x="1241.5" y="448.5" width="245.5" height="39.5" fill="#151515" /><path d="M1242 466 Q1300 455 1392 462 L1405 488 L1242 488Z" fill="#a3954e" /><path d="M1285 465 Q1300 452 1330 458 Q1345 470 1320 475 Q1290 478 1285 465Z" fill="#1c1c1c" stroke="#333" stroke-width="1"/><path d="M1392 446.5 Q1430 446 1486 450 L1486 488 L1412 488 Q1400 470 1392 446.5Z" fill="#c4c4c2" /><path d="M1430 450 Q1470 455 1486 470 L1486 488 L1450 488Z" fill="#8a8a88" /><rect x="1537" y="450" width="300.0" height="38.0" fill="#121212" /><rect x="1570" y="469" width="61.0" height="19.0" fill="#bdbdbb" /><rect x="1573" y="459" width="55.0" height="11.0" fill="#d9d9d6" /><rect x="1631" y="475" width="129.0" height="13.0" fill="#b8b8b4" /><rect x="1650" y="468" width="50.0" height="12.0" fill="#6a7a6a" /><rect x="1700" y="470" width="40.0" height="15.0" fill="#5a5048" /><rect x="1631" y="463" width="129.0" height="25.0" fill="#c9c9c7" /><rect x="1665" y="465" width="35.0" height="11.0" fill="#3a6a8a" /><rect x="1700" y="468" width="30.0" height="12.0" fill="#6a5a50" /><rect x="1777" y="437" width="77.0" height="35.0" fill="#d2d2d0" /><rect x="1778" y="437" width="22.0" height="35.0" fill="#1e1e1e" /><rect x="1800" y="445" width="15.0" height="25.0" fill="#2a2a2a" /><rect x="1745" y="465" width="135.0" height="23.0" fill="#c4c4c2" /><path d="M1756.5 488 L1756.5 424 Q1758 420 1764 421 L1830 430 Q1868 432 1869 450 L1869 488" fill="none" stroke="#e0e0e0" stroke-width="2"/><path d="M1824 421 L1870 436 Q1900 450 1910 470" fill="none" stroke="#d8d8d8" stroke-width="1.5"/><rect x="1886" y="443" width="30.0" height="45.0" fill="#151515" /><rect x="1943" y="433" width="12.5" height="55.0" fill="#2a2a2c" /><rect x="1485" y="162" width="23.5" height="326.0" fill="#b6b7b3" /><line x1="1491.1" y1="162" x2="1491.1" y2="488" stroke="#15151f" stroke-width="2.4" stroke-dasharray="2.4 15.6" stroke-dashoffset="-6"/><line x1="1491.1" y1="162" x2="1491.1" y2="488" stroke="#7c7c7a" stroke-width="1.6" stroke-dasharray="6 12" stroke-dashoffset="-12"/><line x1="1501.0" y1="162" x2="1501.0" y2="488" stroke="#15151f" stroke-width="2.4" stroke-dasharray="2.4 15.6" stroke-dashoffset="-6"/><line x1="1501.0" y1="162" x2="1501.0" y2="488" stroke="#7c7c7a" stroke-width="1.6" stroke-dasharray="6 12" stroke-dashoffset="-12"/><rect x="1508.5" y="162" width="3.5" height="326.0" fill="#3a3a40" /><rect x="1512" y="162" width="24.5" height="326.0" fill="#b6b7b3" /><line x1="1518.4" y1="162" x2="1518.4" y2="488" stroke="#15151f" stroke-width="2.4" stroke-dasharray="2.4 15.6" stroke-dashoffset="-6"/><line x1="1518.4" y1="162" x2="1518.4" y2="488" stroke="#7c7c7a" stroke-width="1.6" stroke-dasharray="6 12" stroke-dashoffset="-12"/><line x1="1528.7" y1="162" x2="1528.7" y2="488" stroke="#15151f" stroke-width="2.4" stroke-dasharray="2.4 15.6" stroke-dashoffset="-6"/><line x1="1528.7" y1="162" x2="1528.7" y2="488" stroke="#7c7c7a" stroke-width="1.6" stroke-dasharray="6 12" stroke-dashoffset="-12"/><rect x="1837" y="162" width="24.0" height="326.0" fill="#b6b7b3" /><line x1="1843.2" y1="162" x2="1843.2" y2="488" stroke="#15151f" stroke-width="2.4" stroke-dasharray="2.4 15.6" stroke-dashoffset="-6"/><line x1="1843.2" y1="162" x2="1843.2" y2="488" stroke="#7c7c7a" stroke-width="1.6" stroke-dasharray="6 12" stroke-dashoffset="-12"/><line x1="1853.3" y1="162" x2="1853.3" y2="488" stroke="#15151f" stroke-width="2.4" stroke-dasharray="2.4 15.6" stroke-dashoffset="-6"/><line x1="1853.3" y1="162" x2="1853.3" y2="488" stroke="#7c7c7a" stroke-width="1.6" stroke-dasharray="6 12" stroke-dashoffset="-12"/><rect x="1861" y="162" width="2.5" height="326.0" fill="#4e4e4c" /><rect x="1863.5" y="162" width="22.5" height="326.0" fill="#b6b7b3" /><line x1="1869.3" y1="162" x2="1869.3" y2="488" stroke="#15151f" stroke-width="2.4" stroke-dasharray="2.4 15.6" stroke-dashoffset="-6"/><line x1="1869.3" y1="162" x2="1869.3" y2="488" stroke="#7c7c7a" stroke-width="1.6" stroke-dasharray="6 12" stroke-dashoffset="-12"/><line x1="1878.8" y1="162" x2="1878.8" y2="488" stroke="#15151f" stroke-width="2.4" stroke-dasharray="2.4 15.6" stroke-dashoffset="-6"/><line x1="1878.8" y1="162" x2="1878.8" y2="488" stroke="#7c7c7a" stroke-width="1.6" stroke-dasharray="6 12" stroke-dashoffset="-12"/><rect x="1916" y="327" width="27.0" height="161.0" fill="#bcbdb9" /><line x1="1923.0" y1="327" x2="1923.0" y2="488" stroke="#15151f" stroke-width="2.4" stroke-dasharray="2.4 15.6" stroke-dashoffset="-6"/><line x1="1923.0" y1="327" x2="1923.0" y2="488" stroke="#7c7c7a" stroke-width="1.6" stroke-dasharray="6 12" stroke-dashoffset="-12"/><line x1="1934.4" y1="327" x2="1934.4" y2="488" stroke="#15151f" stroke-width="2.4" stroke-dasharray="2.4 15.6" stroke-dashoffset="-6"/><line x1="1934.4" y1="327" x2="1934.4" y2="488" stroke="#7c7c7a" stroke-width="1.6" stroke-dasharray="6 12" stroke-dashoffset="-12"/><rect x="1486" y="470" width="51.0" height="10.0" fill="#d0d0d8" /><text x="1265" y="194.2" font-family="Liberation Mono" font-weight="bold" font-size="16" fill="#f4f4f4" stroke="#f4f4f4" stroke-width="0.25" textLength="118" lengthAdjust="spacingAndGlyphs">01-03-2024</text><g fill="none" stroke="#f0f0f0" stroke-width="1.6"><path d="M1400 183 H1416 V190 H1400Z M1400 186.5 H1416 M1398 198 H1420 M1402 194 H1418 M1409 190 V198"/><path d="M1422 184 V198 M1430 184 V198 M1422 188 H1430 M1422 192 H1430 M1420 196 H1432 M1434 183 H1443 V198 M1434 183 V198 M1434 188 H1443 M1434 193 H1443"/></g><path d="M1449 184 H1465 M1451 190 H1463" stroke="#f0f0f0" stroke-width="1.6"/><path d="M1447 197 H1467" stroke="#222" stroke-width="2.2"/><text x="1480" y="194.2" font-family="Liberation Mono" font-weight="bold" font-size="16" fill="#0e0e0e" stroke="#0e0e0e" stroke-width="0.25" textLength="56" lengthAdjust="spacingAndGlyphs">20:20</text><text x="1537" y="194.2" font-family="Liberation Mono" font-weight="bold" font-size="16" fill="#f4f4f4" stroke="#f4f4f4" stroke-width="0.25" textLength="37" lengthAdjust="spacingAndGlyphs">:28</text><text x="1761" y="469" font-family="Liberation Serif" font-weight="bold" font-size="18" fill="#f4f4f4" stroke="#111" stroke-width="0.6" textLength="105" lengthAdjust="spacingAndGlyphs">Camera 01</text></svg>
</body></html>
